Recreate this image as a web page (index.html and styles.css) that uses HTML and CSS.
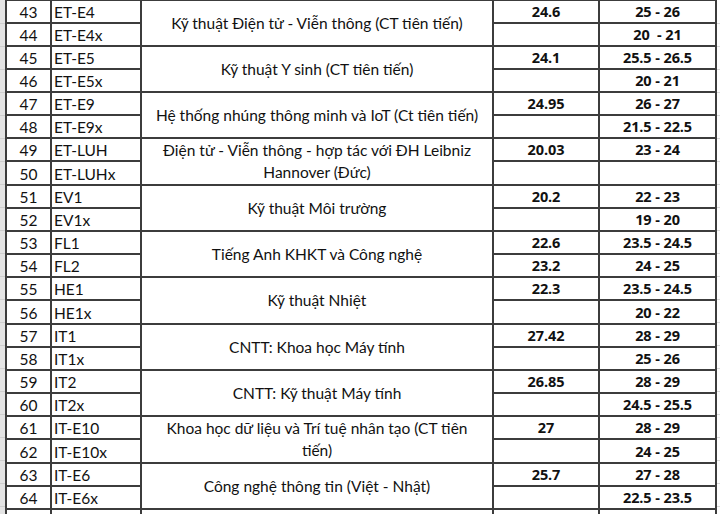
FILE: index.html
```html
<!DOCTYPE html>
<html lang="vi">
<head>
<meta charset="utf-8">
<link rel="stylesheet" href="styles.css">
</head>
<body>
<div class="sheet">
  <div class="edge-left"></div>
  <table class="grid">
    <colgroup>
      <col class="c-a"><col class="c-b"><col class="c-c"><col class="c-d"><col class="c-e">
    </colgroup>
    <tbody>
      <tr><td class="n">43</td><td class="code">ET-E4</td><td class="name" rowspan="2">Kỹ thuật Điện tử - Viễn thông (CT tiên tiến)</td><td class="num">24.6</td><td class="num">25 - 26</td></tr>
      <tr><td class="n">44</td><td class="code">ET-E4x</td><td class="num"></td><td class="num">20&nbsp; - 21</td></tr>
      <tr><td class="n">45</td><td class="code">ET-E5</td><td class="name" rowspan="2">Kỹ thuật Y sinh (CT tiên tiến)</td><td class="num">24.1</td><td class="num">25.5 - 26.5</td></tr>
      <tr><td class="n">46</td><td class="code">ET-E5x</td><td class="num"></td><td class="num">20 - 21</td></tr>
      <tr><td class="n">47</td><td class="code">ET-E9</td><td class="name" rowspan="2">Hệ thống nhúng thông minh và IoT (Ct tiên tiến)</td><td class="num">24.95</td><td class="num">26 - 27</td></tr>
      <tr><td class="n">48</td><td class="code">ET-E9x</td><td class="num"></td><td class="num">21.5 - 22.5</td></tr>
      <tr><td class="n">49</td><td class="code">ET-LUH</td><td class="name" rowspan="2">Điện tử - Viễn thông - hợp tác với ĐH Leibniz<br>Hannover (Đức)</td><td class="num">20.03</td><td class="num">23 - 24</td></tr>
      <tr class="tall"><td class="n">50</td><td class="code">ET-LUHx</td><td class="num"></td><td class="num"></td></tr>
      <tr><td class="n">51</td><td class="code">EV1</td><td class="name" rowspan="2">Kỹ thuật Môi trường</td><td class="num">20.2</td><td class="num">22 - 23</td></tr>
      <tr><td class="n">52</td><td class="code">EV1x</td><td class="num"></td><td class="num">19 - 20</td></tr>
      <tr><td class="n">53</td><td class="code">FL1</td><td class="name" rowspan="2">Tiếng Anh KHKT và Công nghệ</td><td class="num">22.6</td><td class="num">23.5 - 24.5</td></tr>
      <tr><td class="n">54</td><td class="code">FL2</td><td class="num">23.2</td><td class="num">24 - 25</td></tr>
      <tr><td class="n">55</td><td class="code">HE1</td><td class="name" rowspan="2">Kỹ thuật Nhiệt</td><td class="num">22.3</td><td class="num">23.5 - 24.5</td></tr>
      <tr class="tall"><td class="n">56</td><td class="code">HE1x</td><td class="num"></td><td class="num">20 - 22</td></tr>
      <tr><td class="n">57</td><td class="code">IT1</td><td class="name" rowspan="2">CNTT: Khoa học Máy tính</td><td class="num">27.42</td><td class="num">28 - 29</td></tr>
      <tr><td class="n">58</td><td class="code">IT1x</td><td class="num"></td><td class="num">25 - 26</td></tr>
      <tr><td class="n">59</td><td class="code">IT2</td><td class="name" rowspan="2">CNTT: Kỹ thuật Máy tính</td><td class="num">26.85</td><td class="num">28 - 29</td></tr>
      <tr><td class="n">60</td><td class="code">IT2x</td><td class="num"></td><td class="num">24.5 - 25.5</td></tr>
      <tr><td class="n">61</td><td class="code">IT-E10</td><td class="name" rowspan="2">Khoa học dữ liệu và Trí tuệ nhân tạo (CT tiên<br>tiến)</td><td class="num">27</td><td class="num">28 - 29</td></tr>
      <tr class="tall"><td class="n">62</td><td class="code">IT-E10x</td><td class="num"></td><td class="num">24 - 25</td></tr>
      <tr><td class="n">63</td><td class="code">IT-E6</td><td class="name" rowspan="2">Công nghệ thông tin (Việt - Nhật)</td><td class="num">25.7</td><td class="num">27 - 28</td></tr>
      <tr><td class="n">64</td><td class="code">IT-E6x</td><td class="num"></td><td class="num">22.5 - 23.5</td></tr>
      <tr class="partial"><td></td><td></td><td></td><td></td><td></td></tr>
    </tbody>
  </table>
  <div class="edge-right"></div>
</div>
</body>
</html>
```

FILE: styles.css
```css
html, body {
  margin: 0;
  padding: 0;
  background: #ffffff;
  overflow: hidden;
}

.sheet {
  display: flex;
  width: 720px;
  height: 514px;
  overflow: hidden;
  font-family: Lato, "Open Sans", "DejaVu Sans", sans-serif;
  font-size: 15.5px;
  color: #111111;
}

.edge-left {
  flex: 0 0 5px;
  background: repeating-linear-gradient(to bottom, #e4e4e4 0, #e4e4e4 22px, #cfcfcf 22px, #cfcfcf 23px);
  background-position: 0 1px;
}

.edge-right {
  flex: 1 1 auto;
  background: repeating-linear-gradient(to bottom, #ffffff 0, #ffffff 22px, #dadada 22px, #dadada 23px);
  background-position: 0 1px;
}

.grid {
  flex: 0 0 auto;
  border-collapse: collapse;
  table-layout: fixed;
  width: 710px;
  margin-top: -1px;
}

.c-a { width: 45px; }
.c-b { width: 90px; }
.c-c { width: 352px; }
.c-d { width: 106px; }
.c-e { width: 117px; }

.grid td {
  border: 2px solid #3c3c3c;
  height: 20px;
  padding: 0 3px 1px;
  line-height: 18px;
  vertical-align: bottom;
  white-space: nowrap;
  overflow: hidden;
}

.grid tr.tall td {
  height: 21px;
}

.grid td.n {
  text-align: center;
}

.grid td.code {
  text-align: left;
  padding-left: 2px;
}

.grid td.name {
  text-align: center;
  vertical-align: middle;
  line-height: 22px;
}

.grid td.num {
  text-align: center;
  font-family: "Open Sans", Lato, sans-serif;
  font-weight: bold;
  font-size: 14.5px;
  letter-spacing: -0.1px;
}

.grid tr.partial td {
  height: 10px;
}
```
